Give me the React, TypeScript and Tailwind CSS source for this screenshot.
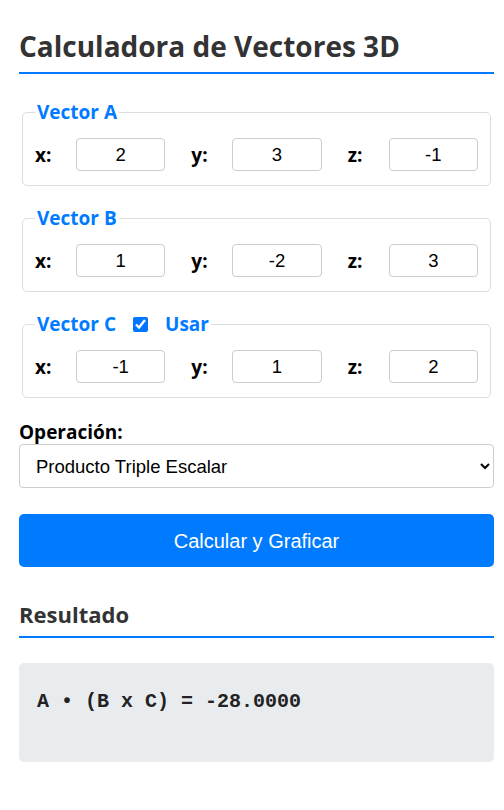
import React, { useState } from 'react';

const sans = "font-['Open_Sans','Noto_Sans',sans-serif]";
const arial = "font-['Liberation_Sans',Arial,sans-serif]";

type Vec = { x: string; y: string; z: string };

const VectorRow: React.FC<{ value: Vec; onChange: (v: Vec) => void }> = ({ value, onChange }) => (
  <div className="grid grid-cols-3 gap-[26px]">
    {(['x', 'y', 'z'] as const).map((k) => (
      <div key={k} className="flex items-center">
        <label className="w-[41px] shrink-0 text-[19px] font-bold text-black leading-[24px]">{k}:</label>
        <input
          type="number"
          value={value[k]}
          onChange={(e) => onChange({ ...value, [k]: e.target.value })}
          className={`${arial} h-[33px] w-full min-w-0 rounded-[4px] border border-[#ccc] bg-white text-center text-[18.5px] text-black outline-none [appearance:textfield] [&::-webkit-inner-spin-button]:appearance-none [&::-webkit-outer-spin-button]:appearance-none`}
        />
      </div>
    ))}
  </div>
);

export default function App() {
  const [a, setA] = useState<Vec>({ x: '2', y: '3', z: '-1' });
  const [b, setB] = useState<Vec>({ x: '1', y: '-2', z: '3' });
  const [c, setC] = useState<Vec>({ x: '-1', y: '1', z: '2' });
  const [useC, setUseC] = useState(true);
  const [op, setOp] = useState('triple');

  return (
    <div className={`${sans} min-h-screen bg-white pl-[19px] pr-[10px] pt-[26px]`}>
      <h1 className="border-b-2 border-[#007bff] pb-[6px] text-[28px] font-bold leading-[40px] text-[#333]">
        Calculadora de Vectores 3D
      </h1>

      <div className="mt-[26px] flex flex-col gap-5">
        <fieldset className="mx-[3px] rounded-[5px] border border-[#ddd] px-3 pb-[14px] pt-[14px]">
          <legend className="px-[2px] text-[19px] font-bold leading-[24px] text-[#007bff]">Vector A</legend>
          <VectorRow value={a} onChange={setA} />
        </fieldset>

        <fieldset className="mx-[3px] rounded-[5px] border border-[#ddd] px-3 pb-[14px] pt-[14px]">
          <legend className="px-[2px] text-[19px] font-bold leading-[24px] text-[#007bff]">Vector B</legend>
          <VectorRow value={b} onChange={setB} />
        </fieldset>

        <fieldset className="mx-[3px] rounded-[5px] border border-[#ddd] px-3 pb-[14px] pt-[14px]">
          <legend className="flex items-center px-[2px] text-[19px] font-bold leading-[24px] text-[#007bff]">
            <span>Vector C</span>
            <input
              type="checkbox"
              checked={useC}
              onChange={(e) => setUseC(e.target.checked)}
              className="ml-[17px] mr-[17px] h-[15px] w-[15px] accent-[#0075ff]"
            />
            <span>Usar</span>
          </legend>
          <VectorRow value={c} onChange={setC} />
        </fieldset>
      </div>

      <label className="mt-[22px] block text-[19px] font-bold leading-[24px] text-black">Operación:</label>
      <select
        value={op}
        onChange={(e) => setOp(e.target.value)}
        className={`${arial} block h-[44px] w-full rounded-[4px] border border-[#ccc] bg-white pl-[12px] pr-[6px] text-[18.5px] text-black outline-none`}
      >
        <option value="suma">Suma</option>
        <option value="resta">Resta</option>
        <option value="punto">Producto Punto</option>
        <option value="cruz">Producto Cruz</option>
        <option value="triple">Producto Triple Escalar</option>
      </select>

      <button className={`${arial} mt-[26px] block h-[53px] w-full rounded-[5px] bg-[#007bff] text-[20px] text-white`}>
        Calcular y Graficar
      </button>

      <h2 className="mt-[32px] border-b-2 border-[#007bff] pb-[7px] text-[22px] font-bold leading-[30px] text-[#333]">
        Resultado
      </h2>

      <div className="mt-[25px] h-[99px] rounded-[5px] bg-[#e9ecef] px-[18px] pt-[27px]">
        <pre className="font-['Liberation_Mono','Courier_New',monospace] text-[20px] font-bold leading-[24px] text-[#222]">
          A • (B x C) = -28.0000
        </pre>
      </div>
    </div>
  );
}
